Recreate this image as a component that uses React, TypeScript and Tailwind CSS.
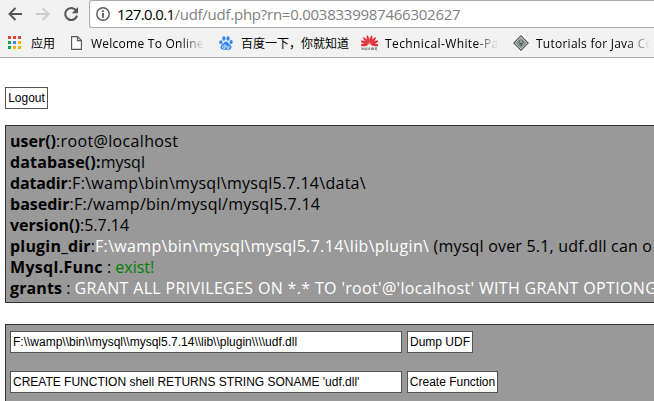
import type { ReactNode } from "react";

const chromeFont = "font-['Open_Sans','Noto_Sans_CJK_SC',sans-serif]";
const fade = "[mask-image:linear-gradient(to_right,black_80%,transparent)]";

function BackIcon() {
  return (
    <svg width="14" height="14" viewBox="0 0 14 14" fill="none" stroke="currentColor" strokeWidth="2">
      <path d="M14 7H1.5M7.5 1L1.5 7l6 6" />
    </svg>
  );
}

function ReloadIcon() {
  return (
    <svg width="16" height="16" viewBox="0 0 16 16">
      <path d="M12.900 4.200A6 6 0 1 0 14 9.600" fill="none" stroke="#555" strokeWidth="2.1" />
      <path d="M15 1v6.200H8.800z" fill="#555" />
    </svg>
  );
}

function InfoIcon() {
  return (
    <svg width="14" height="14" viewBox="0 0 14 14">
      <circle cx="7" cy="7" r="6.2" fill="none" stroke="#5a5a5a" strokeWidth="1.4" />
      <path d="M6.100 3.200h1.800v1.700H6.100zM6.100 6h1.800v4.800H6.100z" fill="#5a5a5a" />
    </svg>
  );
}

function AppsIcon() {
  const colors = ["#dc4437", "#dc4437", "#dc4437", "#0f9d58", "#4285f4", "#f4b400", "#0f9d58", "#f4b400", "#f4b400"];
  return (
    <svg width="13" height="13" viewBox="0 0 13 13">
      {colors.map((c, i) => (
        <rect key={i} x={(i % 3) * 5} y={Math.floor(i / 3) * 5} width="3" height="3" fill={c} />
      ))}
    </svg>
  );
}

function PageIcon() {
  return (
    <svg width="11" height="14" viewBox="0 0 11 14" fill="#fff" stroke="#555" strokeWidth="1.1">
      <path d="M.6.6h5.800l4 4v8.800H.6zM6.400.6v4h4" />
    </svg>
  );
}

function BaiduIcon() {
  return (
    <svg width="14" height="14" viewBox="0 0 14 14" fill="#3385ee">
      <ellipse cx="1.9" cy="6.2" rx="1.6" ry="2" />
      <ellipse cx="4.9" cy="2.5" rx="1.6" ry="2.2" />
      <ellipse cx="9" cy="2.5" rx="1.6" ry="2.2" />
      <ellipse cx="12.1" cy="6" rx="1.6" ry="2" />
      <path d="M7 5.400c1.800 0 2.400 1.800 3.700 2.900 1.200 1 2 1.900 1.700 3.400-.4 2.400-3 2.200-5.400 2s-5 .3-5.400-2c-.2-1.500.7-2.400 1.800-3.400C4.700 7.200 5.200 5.400 7 5.400z" />
      <path d="M6 8.300v4H4.800c-1.800 0-1.800-2.400 0-2.400H6M7.900 9.500v2c0 .6.3.8.8.8h1.300V9.500" fill="none" stroke="#fff" strokeWidth=".8" />
    </svg>
  );
}

function HuaweiIcon() {
  return (
    <svg width="17" height="17" viewBox="0 0 17 17">
      <g fill="#e5303a">
        {[-92, -66, -40, -14, 14, 40, 66, 92].map((a) => (
          <path key={a} d="M8.500 10.800C6.600 7 6.700 3.600 8.500.8 10.300 3.600 10.400 7 8.500 10.800z" transform={`rotate(${a} 8.5 10.8) translate(0 -.8) translate(.6 .76) scale(.93)`} />
        ))}
      </g>
      <path d="M1 13.500v2.500M3 13.500v2.500M1 14.800h2M4.500 13.500v2.300h1.500v-2.300M7.300 16l1-2.500 1 2.500M10.300 13.500l.7 2.500.7-2.500.7 2.500.7-2.500M16 13.700h-1.500v2H16M14.500 14.800H16" fill="none" stroke="#555" strokeWidth=".6" />
    </svg>
  );
}

function DiamondIcon() {
  return (
    <svg width="16" height="16" viewBox="0 0 16 16">
      <path d="M8 .9L15.100 8 8 15.100.9 8z" fill="#e4ece8" stroke="#4c5653" strokeWidth="1.2" />
      <path d="M8 3.300L12.700 8 8 12.700 3.300 8z" fill="#8da39b" stroke="#56625e" strokeWidth=".8" />
      <path d="M5.600 7.500c1.400 1.600 3.400 1.600 4.800 0M6 6.300h1.200M8.800 6.300H10M6.500 10h3" fill="none" stroke="#34403c" strokeWidth=".9" />
    </svg>
  );
}

function Bookmark({ icon, className, children }: { icon: ReactNode; className: string; children: ReactNode }) {
  return (
    <div className="flex shrink-0 items-center">
      <span className="flex w-[17px] shrink-0 justify-center">{icon}</span>
      <span className={`overflow-hidden whitespace-nowrap pt-[2px] ${className}`}>{children}</span>
    </div>
  );
}

function Row({ name, nameClass = "", className = "", children }: { name: string; nameClass?: string; className?: string; children: ReactNode }) {
  return (
    <div className={`h-[21px] whitespace-nowrap ${className}`}>
      <b className={nameClass}>{name}</b>
      {children}
    </div>
  );
}

const control =
  "h-[22px] rounded-none border border-[#555] bg-white font-['Liberation_Sans',Arial,sans-serif] text-[12px] leading-[20px] text-black";

export default function App() {
  return (
    <div className="h-[401px] w-[654px] overflow-hidden bg-white text-black">
      <header className={`h-[58px] border-b border-[#aaa] bg-[#f2f2f2] ${chromeFont}`}>
        <div className="flex h-[28px]">
          <div className="flex w-[89px] shrink-0 items-center pl-2">
            <span className="text-[#555]"><BackIcon /></span>
            <span className="ml-[14px] rotate-180 text-[#ccc]"><BackIcon /></span>
            <span className="ml-[13px]"><ReloadIcon /></span>
          </div>
          <div className="flex h-[28px] grow items-center rounded-l-[3px] border border-r-0 border-[#aaa] bg-white pl-[6px]">
            <InfoIcon />
            <span className="ml-[7px] whitespace-nowrap text-[15px] leading-[26px] tracking-[-0.25px] text-[#808080]">
              <span className="tracking-[-0.65px] text-black">127.0.0.1</span>/udf/udf.php?rn=0.0038339987466302627
            </span>
          </div>
        </div>
        <nav className="flex h-[29px] items-center pl-[6px] text-[12px]">
          <Bookmark icon={<AppsIcon />} className="ml-2 w-[37px]">应用</Bookmark>
          <Bookmark icon={<PageIcon />} className={`ml-[6px] w-[113px] mr-[13px] tracking-[0.25px] ${fade}`}>Welcome To Online</Bookmark>
          <Bookmark icon={<BaiduIcon />} className="ml-[7px] w-[120px]">百度一下，你就知道</Bookmark>
          <Bookmark icon={<HuaweiIcon />} className={`ml-[7px] mr-[14px] w-[113px] tracking-[0.4px] ${fade}`}>Technical-White-Pap</Bookmark>
          <Bookmark icon={<DiamondIcon />} className={`ml-[7px] w-[114px] tracking-[0.25px] ${fade}`}>Tutorials for Java Co</Bookmark>
        </nav>
      </header>

      <main className="pl-[5px] pt-[29px]">
        <button className={`block w-[43px] ${control}`}>Logout</button>

        <section className="mt-4 h-[178px] w-[649px] overflow-hidden border border-r-0 border-[#333] bg-[#999] pl-1 pt-[5px] font-['Open_Sans',sans-serif] text-[16px] leading-[21px]">
          <Row name="user()" className="tracking-[0.35px]" nameClass="tracking-normal">:root@localhost</Row>
          <Row name="database():" nameClass="tracking-[0.15px]">mysql</Row>
          <Row name="datadir" className="tracking-[0.28px]" nameClass="tracking-[-0.15px]">:F:\wamp\bin\mysql\mysql5.7.14\data\</Row>
          <Row name="basedir" className="tracking-[0.25px]" nameClass="tracking-normal">:F:/wamp/bin/mysql/mysql5.7.14</Row>
          <Row name="version()">:5.7.14</Row>
          <Row name="plugin_dir" nameClass="tracking-[0.2px]">
            :<span className="tracking-[0.33px] text-white">F:\wamp\bin\mysql\mysql5.7.14\lib\plugin\</span>
            <span className="tracking-[0.2px]"> (mysql over 5.1, udf.dll can o</span>
          </Row>
          <Row name="Mysql.Func" nameClass="tracking-[0.3px]"> : <span className="text-[#008000]">exist!</span></Row>
          <Row name="grants" nameClass="tracking-[0.1px]">
            {" : "}<span className="tracking-[0.34px] text-white">GRANT ALL PRIVILEGES ON *.* TO 'root'@'localhost' WITH GRANT OPTIONG</span>
          </Row>
        </section>

        <section className="mt-[21px] h-[100px] w-[760px] border border-[#333] bg-[#999] pl-1 pt-[6px]">
          <div className="flex gap-[5px]">
            <input className={`w-[392px] px-[2px] ${control}`} defaultValue={"F:\\\\wamp\\\\bin\\\\mysql\\\\mysql5.7.14\\\\lib\\\\plugin\\\\\\\\udf.dll"} />
            <button className={`w-[66px] ${control}`}>Dump UDF</button>
          </div>
          <div className="mt-[18px] flex gap-[5px]">
            <input className={`w-[392px] px-[2px] ${control}`} defaultValue="CREATE FUNCTION shell RETURNS STRING SONAME 'udf.dll'" />
            <button className={`w-[91px] ${control}`}>Create Function</button>
          </div>
        </section>
      </main>
    </div>
  );
}
